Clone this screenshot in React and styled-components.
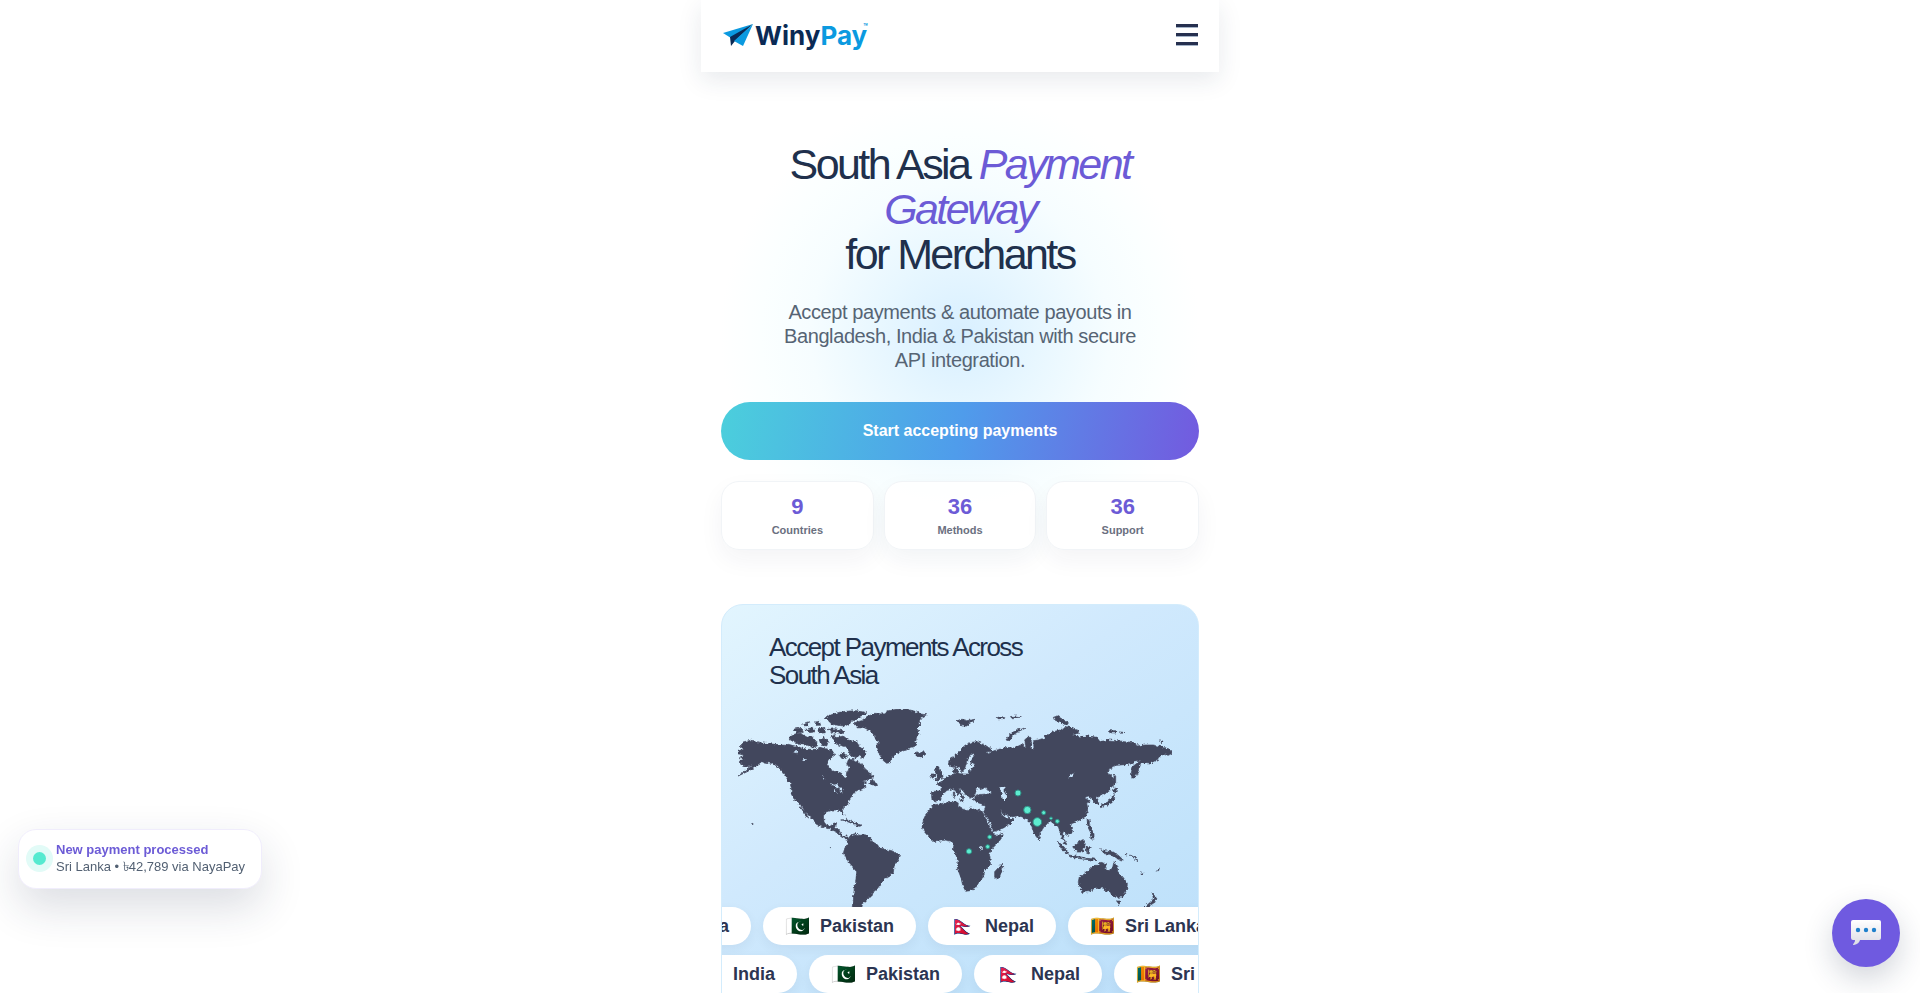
import React from 'react'
import styled, { createGlobalStyle } from 'styled-components';

const stats = [
  { label: 'Countries', value: '9' },
  { label: 'Methods', value: '36' },
  { label: 'Support', value: '36' },
];

const countries = [
  { name: 'India', flag: '🇮🇳' },
  { name: 'Pakistan', flag: '🇵🇰' },
  { name: 'Nepal', flag: '🇳🇵' },
  { name: 'Sri Lanka', flag: '🇱🇰' },
];

const land = [
  // north america
  'M54,184 72,178 60,168 72,156 95,150 120,158 165,163 195,166 205,163 240,172 262,178 285,178 300,172 322,178 335,180 345,195 338,200 325,212 320,222 328,235 340,243 355,246 365,250 372,262 378,266 380,250 385,240 388,232 380,222 385,210 400,208 410,215 425,222 435,236 450,248 462,258 456,266 440,270 425,274 440,276 428,283 440,290 430,296 414,300 405,306 396,318 388,328 384,340 372,350 366,358 371,372 372,378 366,374 361,362 350,360 335,360 318,366 310,378 312,396 320,406 332,408 340,400 350,398 348,410 345,414 356,418 362,430 368,438 380,438 384,446 376,446 366,442 356,434 346,424 332,418 315,412 300,408 288,402 280,390 268,378 255,366 248,352 240,346 232,336 220,324 214,312 214,290 212,284 204,270 194,256 184,240 172,230 158,220 140,218 125,215 112,225 100,235 80,246 54,258 82,238 98,226 86,230 68,226 58,214 74,208 58,206 72,196 54,192Z',
  'M240,350 252,362 266,384 262,384 250,368Z',
  'M446,280 458,268 462,276 472,282 468,288 456,284Z',
  // arctic islands
  'M316,82 345,70 375,64 410,62 440,68 425,80 405,88 390,100 375,108 350,106 335,102 325,92Z',
  'M340,145 370,138 385,150 410,156 420,172 440,184 430,205 415,198 405,205 392,195 386,182 375,170 355,165 345,155Z',
  'M211,135 240,130 262,142 274,138 290,155 292,168 275,172 255,162 235,160 208,150Z',
  'M298,150 310,142 326,152 320,168 304,166Z',
  'M324,118 345,116 374,124 370,130 340,128Z',
  'M220,118 240,114 250,124 232,130Z',
  'M248,104 266,98 264,110Z',
  'M258,118 280,112 284,126 266,128Z',
  'M282,96 298,94 302,106 288,106Z',
  'M296,116 314,112 316,128 300,130Z',
  'M330,140 344,134 346,150Z',
  'M358,196 372,190 382,200 366,206Z',
  // greenland, iceland, svalbard
  'M402,98 425,92 440,80 465,70 490,72 505,62 530,58 560,57 585,64 600,72 620,74 605,82 598,92 600,108 590,118 598,128 590,140 586,155 588,168 572,172 560,180 545,184 530,190 518,200 508,218 500,220 488,210 480,196 474,182 470,168 480,158 468,150 462,135 450,122 430,112 415,114Z',
  'M582,190 590,186 595,190 612,184 618,192 608,200 592,200Z',
  'M708,92 725,88 740,92 765,88 750,100 740,108 725,108 722,98Z',
  // caribbean
  'M362,390 380,388 400,396 412,402 400,402 380,394Z',
  'M408,402 426,405 420,409 408,407Z',
  // south america
  'M384,446 392,436 404,431 420,436 435,434 450,442 458,456 470,462 480,474 495,478 515,482 535,492 540,500 530,516 522,530 520,548 508,560 492,566 482,582 472,596 460,606 456,618 446,620 440,630 428,640 424,660 396,660 400,630 402,600 408,570 410,545 398,532 385,518 376,500 370,490 374,475 382,462Z',
  // africa
  'M640,345 658,342 680,338 705,336 715,336 714,350 725,356 742,362 750,354 770,360 785,362 790,370 796,384 808,407 820,430 824,436 840,434 850,430 846,442 836,456 820,472 806,490 810,500 811,525 795,540 790,560 775,580 765,596 750,602 737,604 728,585 722,560 712,535 714,515 708,495 700,480 702,462 695,454 675,450 650,455 636,450 622,436 612,424 606,410 610,390 618,372 630,358Z',
  'M824,545 836,532 847,519 848,535 840,560 832,568 824,562Z',
  // europe and asia
  'M634,305 650,303 662,303 664,292 655,286 648,282 662,276 668,270 680,262 695,256 705,254 708,248 699,244 702,234 712,236 716,250 728,252 745,252 750,240 758,236 762,222 752,220 756,206 764,196 754,190 742,208 738,222 734,236 726,246 718,232 710,228 700,232 690,228 686,218 690,208 705,198 718,182 735,166 750,158 768,155 790,162 812,176 816,184 800,186 806,192 822,182 840,178 860,172 880,174 892,168 908,164 918,172 914,150 922,142 932,142 935,160 934,178 942,174 940,152 955,150 970,145 985,132 1000,125 1020,120 1040,110 1052,112 1062,118 1076,122 1074,130 1055,136 1080,140 1105,138 1130,142 1140,155 1165,150 1190,152 1215,155 1245,158 1250,168 1275,165 1300,165 1330,172 1350,180 1356,190 1345,196 1325,192 1318,205 1300,215 1285,222 1270,218 1262,222 1256,240 1245,262 1236,266 1234,245 1240,228 1264,210 1245,213 1232,222 1215,224 1190,226 1170,238 1160,250 1172,254 1180,262 1180,280 1170,298 1155,312 1140,316 1130,322 1136,338 1130,344 1122,336 1118,326 1105,318 1095,322 1100,328 1112,334 1100,340 1104,358 1100,372 1090,385 1075,392 1062,398 1052,402 1058,418 1055,430 1045,436 1036,430 1030,424 1028,434 1036,455 1040,464 1034,462 1026,445 1020,425 1015,410 1008,408 1000,400 990,392 984,398 970,414 960,428 956,443 950,442 940,425 934,408 930,396 918,386 905,380 890,378 878,380 862,376 850,372 840,358 846,374 856,384 868,382 882,390 870,402 850,414 825,424 820,422 812,402 800,382 791,364 796,352 796,344 785,342 768,336 760,330 762,320 775,314 800,312 812,312 815,304 800,298 796,292 785,298 775,292 768,303 764,316 750,325 740,318 732,306 724,298 716,295 724,312 734,322 730,328 718,316 706,302 698,296 686,300 672,308 664,325 652,333 636,330Z',
  'M648,232 656,230 660,242 668,252 670,264 655,270 645,270 654,260 646,248Z',
  'M632,264 636,252 645,252 643,264Z',
  'M700,322 704,322 704,306 700,306Z',
  'M718,330 730,330 727,336Z',
  'M858,150 870,132 890,120 918,114 896,124 878,136 870,152Z',
  'M832,82 852,80 850,86 834,86Z',
  'M868,80 888,78 904,80 880,86Z',
  'M1000,82 1012,78 1028,88 1045,98 1042,104 1028,102 1022,94 1004,92Z',
  'M1166,122 1190,122 1188,129 1166,128Z',
  'M1198,126 1212,127 1204,130Z',
  'M1318,153 1330,153 1326,158Z',
  // japan and the pacific islands
  'M1182,255 1187,262 1187,285 1182,292 1180,280Z',
  'M1176,300 1186,294 1192,302 1180,308Z',
  'M1182,310 1184,325 1176,338 1160,345 1142,353 1138,348 1160,336 1172,328Z',
  'M1101,386 1108,392 1108,404 1122,432 1122,448 1112,446 1114,432 1104,412Z',
  'M1058,470 1075,457 1088,449 1096,462 1088,486 1070,486Z',
  'M1012,454 1028,466 1046,488 1044,494 1030,482Z',
  'M1046,495 1080,500 1100,505 1128,508 1120,511 1080,506 1050,501Z',
  'M1098,470 1114,470 1106,478 1108,492 1100,490Z',
  'M1140,476 1150,482 1166,484 1180,486 1195,496 1210,510 1190,506 1172,494 1152,490Z',
  'M1214,496 1220,490 1222,494Z',
  'M1230,494 1250,506 1254,512 1238,502Z',
  'M1262,548 1272,554 1268,556Z',
  'M1310,542 1318,534 1316,542Z',
  // australia, new zealand
  'M1078,560 1095,551 1110,538 1122,526 1134,526 1142,517 1160,521 1156,535 1170,543 1178,532 1182,515 1190,530 1195,547 1208,560 1222,580 1220,600 1208,621 1190,622 1175,614 1168,602 1158,604 1150,594 1122,596 1105,605 1086,607 1080,590 1075,575Z',
  'M1190,633 1202,633 1198,644Z',
  'M1296,608 1304,618 1312,624 1302,632Z',
  'M1300,628 1306,636 1290,646 1284,656 1270,656Z',
  'M956,438 962,446 958,450Z',
  'M94,398 100,402 96,404Z',
  'M331,472 335,474 332,476Z',
];

const lakes = [
  'M330,278 342,284 352,282 358,294 352,298 346,288 334,286Z',
  'M346,294 350,308 345,306Z',
  'M358,292 372,296 364,300 368,308 360,304Z',
  'M304,252 316,268 312,268Z',
  'M218,186 236,182 232,190Z',
  'M242,208 262,208 252,214Z',
  'M838,292 858,290 850,300 861,314 860,330 848,330 846,314Z',
  'M1044,262 1060,250 1064,248 1058,260Z',
  'M780,474 788,470 788,480 782,482Z',
];

const pins = [
  [894, 309, 9],
  [922, 360, 11],
  [952, 396, 13],
  [971, 368, 6],
  [993, 385, 4],
  [1012, 394, 6],
  [809, 441, 6],
  [803, 470, 6],
  [747, 484, 8],
];

const App = () => {
  return (
    <>
      <GlobalStyle />
      <Shell>
        <Header>
          <Brand href="#home" aria-label="WinyPay">
            <svg width="30" height="24" viewBox="0 0 30 24" aria-hidden="true">
              <path d="M0 9 30 0 8 14Z" fill="#0b9ae0" />
              <path d="M7 13 30 0 12 17 8 22Z" fill="#0a2a55" />
              <path d="M11 17 30 0 20 22Z" fill="#0b9ae0" />
            </svg>
            <span>Winy</span>
            <BrandAccent>Pay</BrandAccent>
            <sup>™</sup>
          </Brand>
          <MenuButton type="button" aria-label="Open menu">
            <i />
            <i />
            <i />
          </MenuButton>
        </Header>

        <Hero>
          <h1>
            South Asia <em>Payment Gateway</em>
            <br />
            for Merchants
          </h1>
          <p>
            Accept payments &amp; automate payouts in Bangladesh, India &amp; Pakistan with secure
            API integration.
          </p>
          <CtaButton type="button">Start accepting payments</CtaButton>
          <StatGrid>
            {stats.map(({ label, value }) => (
              <StatCard key={label}>
                <strong>{value}</strong>
                <span>{label}</span>
              </StatCard>
            ))}
          </StatGrid>
        </Hero>

        <MapCard>
          <h2>Accept Payments Across South Asia</h2>
          <WorldMap />
          <Marquee>
            <CountryRow shift={-92} />
            <CountryRow shift={-46} />
          </Marquee>
        </MapCard>
      </Shell>

      <Toast role="status">
        <Pulse />
        <div>
          <strong>New payment processed</strong>
          <p>Sri Lanka • ৳42,789 via NayaPay</p>
        </div>
      </Toast>
      <ChatButton type="button" aria-label="Open chat">
        <ChatIcon />
      </ChatButton>
    </>
  )
}

const WorldMap = () => (
  <MapSvg viewBox="6 51 1428 600" role="img" aria-label="World map">
    {/* ragged coastline */}
    <filter id="coast" x="0" y="0" width="1" height="1">
      <feTurbulence type="fractalNoise" baseFrequency="0.12" numOctaves="3" seed="4" />
      <feDisplacementMap in="SourceGraphic" scale="12" xChannelSelector="R" yChannelSelector="G" />
    </filter>
    <g filter="url(#coast)">
      <path d={land.join(' ')} fill="#43475d" stroke="#43475d" strokeWidth="2" />
      <path d={lakes.join(' ')} fill="#cbe6fd" />
    </g>
    {pins.map(([x, y, r]) => (
      <circle key={`${x}-${y}`} cx={x} cy={y} r={r} fill="#5eecd0" stroke="#2f8f86" strokeWidth="3" />
    ))}
  </MapSvg>
)

const ChatIcon = () => (
  <svg width="32" height="28" viewBox="0 0 32 28" aria-hidden="true">
    <defs>
      <linearGradient id="bubble" x1="0" y1="0" x2="0" y2="1">
        <stop offset="0" stopColor="#ffffff" />
        <stop offset="1" stopColor="#dcdce4" />
      </linearGradient>
    </defs>
    <path
      d="M3 1H29Q31 1 31 3V19Q31 21 29 21H10Q9 25 4 26Q2 26 4 24Q5 23 5 21H3Q1 21 1 19V3Q1 1 3 1Z"
      fill="url(#bubble)"
    />
    <circle cx="8" cy="11" r="2.2" fill="#1f80cc" />
    <circle cx="16" cy="11" r="2.2" fill="#1f80cc" />
    <circle cx="24" cy="11" r="2.2" fill="#1f80cc" />
  </svg>
)

const CountryRow = ({ shift }) => (
  <Track $shift={shift}>
    {countries.map(({ name, flag }) => (
      <Chip key={name}>
        <Flag>{flag}</Flag>
        {name}
      </Chip>
    ))}
  </Track>
)

const GlobalStyle = createGlobalStyle`
  * {
    box-sizing: border-box;
    margin: 0;
    padding: 0;
  }

  html {
    scrollbar-width: none;
  }

  body {
    background: #fff;
    color: #20304c;
    font-family: "Liberation Sans", Arial, sans-serif;
  }

  button {
    border: 0;
    font-family: inherit;
    cursor: pointer;
  }
`;

const Shell = styled.main`
  max-width: 520px;
  margin: 0 auto;
  padding: 0 1px;
  background: radial-gradient(circle at 50% 335px, #d8efff 0, #e8f7ff 80px, #f6fdff 150px, #fbffff 200px, #fff 240px);
`;

const Header = styled.header`
  display: flex;
  align-items: center;
  justify-content: space-between;
  height: 72px;
  padding: 0 21px 0 20px;
  background: #fff;
  box-shadow: 0 8px 24px rgba(30, 45, 75, 0.1);
`;

const Brand = styled.a`
  display: flex;
  align-items: center;
  color: #0a2a55;
  font-family: Inter, sans-serif;
  font-size: 26px;
  font-weight: 700;
  line-height: 32px;
  text-decoration: none;

  svg {
    margin: 0 2px;
  }

  sup {
    align-self: flex-start;
    margin-left: -4px;
    color: #0b9ae0;
    font-size: 7px;
    line-height: 14px;
  }
`;

const BrandAccent = styled.span`
  color: #0b9ae0;
`;

const MenuButton = styled.button`
  display: flex;
  flex-direction: column;
  gap: 6px;
  padding-bottom: 3px;
  background: none;

  i {
    width: 22px;
    height: 3px;
    background: #26304f;
    box-shadow: 0 1px 0 #a5b4c8;
  }
`;

const Hero = styled.section`
  padding: 70px 20px 54px;
  text-align: center;

  h1 {
    font-size: 43px;
    font-weight: 400;
    letter-spacing: -0.06em;
    line-height: 45px;
  }

  em {
    color: #6c5bd6;
  }

  p {
    max-width: 370px;
    margin: 23px auto 30px;
    color: #566474;
    font-size: 20px;
    letter-spacing: -0.02em;
    line-height: 24px;
  }
`;

const CtaButton = styled.button`
  width: 100%;
  height: 58px;
  border-radius: 29px;
  background: linear-gradient(100deg, #4bcfdc 0%, #4f9ceb 50%, #735adf 100%);
  color: #fff;
  font-size: 16px;
  font-weight: 700;
`;

const StatGrid = styled.div`
  display: grid;
  grid-template-columns: repeat(3, 1fr);
  gap: 10px;
  margin-top: 21px;
`;

const StatCard = styled.div`
  display: flex;
  flex-direction: column;
  gap: 4px;
  padding: 12px 8px;
  border: 1px solid #f1f4f7;
  border-radius: 18px;
  background: rgba(255, 255, 255, 0.88);
  box-shadow: 0 10px 24px rgba(30, 45, 75, 0.05);

  strong {
    color: #6c5bd6;
    font-size: 22px;
    line-height: 26px;
  }

  span {
    color: #6b7080;
    font-size: 11px;
    font-weight: 700;
    line-height: 13px;
  }
`;

const MapCard = styled.section`
  margin: 0 20px;
  padding: 28px 0 24px;
  overflow: hidden;
  border: 1px solid #d3ecfc;
  border-radius: 22px;
  background: linear-gradient(145deg, #e2f5fe 0%, #d0e9fd 40%, #c2e3fb 75%, #bbdefa 100%);

  h2 {
    max-width: 360px;
    padding: 0 47px;
    font-size: 26px;
    font-weight: 400;
    letter-spacing: -0.06em;
    line-height: 28px;
  }
`;

const MapSvg = styled.svg`
  display: block;
  width: 100%;
  margin-top: 18px;
`;

const Marquee = styled.div`
  display: flex;
  flex-direction: column;
  gap: 10px;
`;

const Track = styled.div`
  display: flex;
  gap: 12px;
  width: max-content;
  transform: translateX(${({ $shift }) => $shift}px);
`;

const Chip = styled.div`
  display: flex;
  align-items: center;
  gap: 10px;
  height: 38px;
  padding: 0 22px;
  border-radius: 19px;
  background: #fff;
  box-shadow: 0 4px 12px rgba(30, 45, 75, 0.06);
  color: #2c3552;
  font-size: 18px;
  font-weight: 700;
`;

const Flag = styled.span`
  font-size: 20px;
  line-height: 24px;
`;

const Toast = styled.aside`
  position: fixed;
  left: 18px;
  bottom: 104px;
  display: flex;
  align-items: center;
  gap: 10px;
  padding: 11px 16px 13px 14px;
  border: 1px solid #f0edfc;
  border-radius: 18px;
  background: #fff;
  box-shadow: 0 18px 44px rgba(30, 45, 75, 0.16);
  color: #526072;
  font-size: 13px;
  line-height: 17px;

  strong {
    color: #6c5bd6;
  }
`;

const Pulse = styled.span`
  width: 13px;
  height: 13px;
  border-radius: 50%;
  background: #56ead0;
  box-shadow: 0 0 0 7px #e2fbf7;
`;

const ChatButton = styled.button`
  position: fixed;
  right: 20px;
  bottom: 26px;
  display: grid;
  place-items: center;
  width: 68px;
  height: 68px;
  border-radius: 50%;
  background: #6f5ae0;
  box-shadow: 0 12px 30px rgba(30, 45, 75, 0.2);
`;

export default App
